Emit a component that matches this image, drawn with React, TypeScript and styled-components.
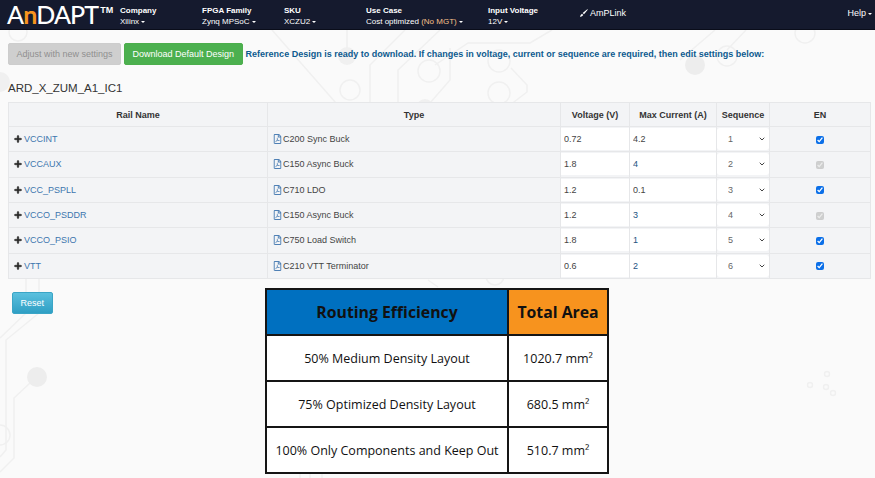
import React from "react";
import styled, { createGlobalStyle } from "styled-components";
import { FaPlus, FaRegFilePdf } from "react-icons/fa";
import { ChevronDown } from "lucide-react";

const Global = createGlobalStyle`
  html, body { margin: 0; padding: 0; }
  body { background: #fafafa; font-family: "Liberation Sans", Arial, sans-serif; color: #333; overflow: hidden; }
`;

const Page = styled.div`
  position: relative;
  width: 875px;
  height: 478px;
  overflow: hidden;
`;

const Backdrop = styled.svg`
  position: absolute;
  left: 0;
  top: 0;
  width: 875px;
  height: 478px;
  fill: none;
  stroke: #f0f0f0;
  stroke-width: 1.5;
`;

const Content = styled.div`
  position: relative;
  display: flex;
  flex-direction: column;
`;

const NavBar = styled.header`
  height: 29px;
  background: #151a2e;
  border-bottom: 1px solid #0a0d1a;
  display: flex;
  align-items: flex-start;
  color: #fff;
  position: relative;
`;

const Logo = styled.div`
  width: 120px;
  padding-left: 7px;
  box-sizing: border-box;
  font-size: 25px;
  line-height: 28px;
  font-family: "Lato", "Liberation Sans", sans-serif;
  font-weight: 500;
  letter-spacing: -0.9px;
  white-space: nowrap;
  sup { font-size: 9px; font-weight: 700; vertical-align: 11px; line-height: 0; letter-spacing: 0; margin-left: 2px; font-family: "Liberation Sans", sans-serif; }
  b { color: #f7941e; font-weight: 700; }
`;

const NavItem = styled.div<{ $w: number }>`
  width: ${(p) => p.$w}px;
  padding-top: 5px;
  font-size: 8px;
  line-height: 11px;
  white-space: nowrap;
  strong { display: block; font-weight: 700; }
  em { color: #f7c08a; font-style: normal; }
`;

const Caret = styled.i`
  display: inline-block;
  width: 0;
  height: 0;
  margin-left: 2px;
  vertical-align: middle;
  border-top: 2px solid #fff;
  border-left: 2.5px solid transparent;
  border-right: 2.5px solid transparent;
`;

const NavLink = styled.div`
  display: flex;
  align-items: center;
  gap: 2px;
  font-size: 9px;
  padding-top: 8px;
  line-height: 10px;
  svg { width: 8px; height: 8px; }
`;

const Help = styled.div`
  margin-left: auto;
  margin-right: 3px;
  padding-top: 8px;
  font-size: 9px;
  line-height: 10px;
`;

const ActionRow = styled.div`
  display: flex;
  align-items: center;
  padding: 13px 0 0 8px;
  gap: 3px;
`;

const Btn = styled.button<{ $kind: "muted" | "success" | "info" }>`
  height: 22px;
  padding: 0 7.5px;
  border-radius: 2px;
  font: 9px/20px "Liberation Sans", Arial, sans-serif;
  white-space: nowrap;
  color: ${(p) => (p.$kind === "muted" ? "#8f8f8f" : "#fff")};
  border: 1px solid
    ${(p) => (p.$kind === "muted" ? "#cdcdcd" : p.$kind === "success" ? "#4cae4c" : "#3aa5c6")};
  background: ${(p) =>
    p.$kind === "muted"
      ? "#cfcfcf"
      : p.$kind === "success"
        ? "#4cb04f"
        : "linear-gradient(#5bc0de, #2f9fc4)"};
`;

const Notice = styled.p`
  margin: 0;
  color: #0d5a8f;
  font-size: 9px;
  font-weight: 700;
  white-space: nowrap;
`;

const DesignTitle = styled.h3`
  margin: 16px 0 0 8px;
  font-size: 11.5px;
  font-weight: 400;
  line-height: 14px;
  color: #333;
`;

const RailTable = styled.table`
  margin: 7px 0 0 8px;
  width: 862px;
  height: 177px;
  table-layout: fixed;
  border-collapse: collapse;
  font-size: 9px;
  background: #f3f4f6;

  th, td { border: 1px solid #e6e7e9; padding: 0; }
  th { font-size: 9px; font-weight: 700; height: 23px; text-align: center; color: #333; }
  td { height: 24px; }
`;

const NameCell = styled.td`
  padding-left: 5px !important;
  white-space: nowrap;
  a { color: #3d76ae; text-decoration: none; }
  svg { width: 8px; height: 8px; color: #222; stroke: currentColor; stroke-width: 30; vertical-align: -1px; margin-right: 2px; }
`;

const TypeCell = styled.td`
  padding-left: 5px !important;
  white-space: nowrap;
  color: #444;
  svg { width: 9px; height: 10px; color: #4f80b5; vertical-align: -2px; margin-right: 1px; }
`;

const ValueInput = styled.input<{ $link?: boolean }>`
  display: block;
  box-sizing: border-box;
  width: 100%;
  height: 22px;
  padding: 0 3px;
  border: 0;
  background: #fff;
  color: ${(p) => (p.$link ? "#24527f" : "#444")};
  font: 9px "Liberation Sans", Arial, sans-serif;
`;

const SeqWrap = styled.div`
  position: relative;
  svg {
    position: absolute;
    right: 3px;
    top: 7px;
    width: 8px;
    height: 8px;
    color: #444;
    pointer-events: none;
  }
`;

const SeqSelect = styled.select`
  display: block;
  box-sizing: border-box;
  width: 100%;
  height: 22px;
  padding: 0 11px;
  border: 0;
  border-radius: 3px;
  background: #fff;
  color: #666;
  appearance: none;
  font: 9px "Liberation Sans", Arial, sans-serif;
`;

const EnCell = styled.td`
  text-align: center;
  input { width: 8px; height: 8px; margin: 0; vertical-align: middle; accent-color: #0b6fe8; }
`;

const LowerSection = styled.div`
  display: grid;
  grid-template-columns: 265px 343px;
  align-items: start;
`;

const ResetCell = styled.div`
  padding: 13px 0 0 12px;
`;

const Summary = styled.table`
  margin-top: 9px;
  width: 343px;
  height: 185px;
  border-collapse: collapse;
  table-layout: fixed;
  font-family: "Open Sans", "Noto Sans", sans-serif;
  background: #fff;
  color: #111;

  th, td { border: 2px solid #151515; padding: 0; text-align: center; white-space: nowrap; height: 44px; }
  td { font-size: 12.5px; }
`;

const SummaryHead = styled.th<{ $bg: string }>`
  background: ${(p) => p.$bg};
  font-size: 15.8px;
  font-weight: 700;
`;

const rails = [
  ["VCCINT", "C200 Sync Buck", "0.72", "4.2", "1", true],
  ["VCCAUX", "C150 Async Buck", "1.8", "4", "2", false],
  ["VCC_PSPLL", "C710 LDO", "1.2", "0.1", "3", true],
  ["VCCO_PSDDR", "C150 Async Buck", "1.2", "3", "4", false],
  ["VCCO_PSIO", "C750 Load Switch", "1.8", "1", "5", true],
  ["VTT", "C210 VTT Terminator", "0.6", "2", "6", true],
] as const;

const nav = [
  { w: 82, label: "Company", value: <>Xilinx</> },
  { w: 82, label: "FPGA Family", value: <>Zynq MPSoC</> },
  { w: 82, label: "SKU", value: <>XCZU2</> },
  { w: 122, label: "Use Case", value: <>Cost optimized <em>(No MGT)</em></> },
  { w: 92, label: "Input Voltage", value: <>12V</> },
];

const summary = [
  ["50% Medium Density Layout", "1020.7 mm²"],
  ["75% Optimized Density Layout", "680.5 mm²"],
  ["100% Only Components and Keep Out", "510.7 mm²"],
];

function CircuitBackdrop() {
  return (
    <Backdrop viewBox="0 0 875 478" aria-hidden="true">
      <path d="M272 30l64 73M347 30v26M405 30l-35 35v38M440 30l-42 40v33M552 30l-22 13h-62l-33 22M511 68l16 17v7l-17 13M450 48v32l-20 23M746 30l-19 20M715 30l-35 30" />
      <circle cx="347" cy="56" r="9" fill="#f0f0f0" stroke="none" />
      <circle cx="350" cy="90" r="10" />
      <circle cx="429" cy="71" r="11" />
      <circle cx="499" cy="61" r="11" />
      <circle cx="499" cy="93" r="11" />
      <circle cx="425" cy="108" r="9" fill="#f0f0f0" stroke="none" />
      <circle cx="805" cy="33" r="10" />
      <circle cx="727" cy="56" r="10" />
      <circle cx="695" cy="65" r="10" fill="#ededed" stroke="none" />
      <circle cx="18" cy="32" r="9" />
      <circle cx="0" cy="82" r="10" fill="#f0f0f0" stroke="none" />
      <path d="M26 279v34L0 338M39 279v34L6 340v110l-6 7M30 383l-16 15v60l-14 14" />
      <circle cx="37" cy="377" r="10" fill="#ededed" stroke="none" />
      <circle cx="0" cy="435" r="10" />
      <circle cx="495" cy="276" r="9" />
      <path d="M428 280l10 7M300 472v6M310 472v6M322 472v6" />
      <circle cx="810" cy="385" r="2.5" />
      <circle cx="826" cy="387" r="2.5" />
      <circle cx="827" cy="374" r="2.5" />
      <circle cx="833" cy="393" r="2.5" />
    </Backdrop>
  );
}

export default function App() {
  return (
    <Page>
      <Global />
      <CircuitBackdrop />
      <Content>
        <NavBar>
          <Logo>A<b>n</b>DAPT<sup>TM</sup></Logo>
          {nav.map((n) => (
            <NavItem key={n.label} $w={n.w}>
              <strong>{n.label}</strong>
              {n.value}
              <Caret />
            </NavItem>
          ))}
          <NavLink>
            <svg viewBox="0 0 12 12" aria-hidden="true">
              <path d="M0 12l3-1 2-2-2-2-2 2zM6 8l5-6 1-2-2 1-6 5z" fill="#fff" />
            </svg>
            AmPLink
          </NavLink>
          <Help>Help<Caret /></Help>
        </NavBar>

        <ActionRow>
          <Btn $kind="muted">Adjust with new settings</Btn>
          <Btn $kind="success">Download Default Design</Btn>
          <Notice>
            Reference Design is ready to download. If changes in voltage, current or sequence are required, then edit settings below:
          </Notice>
        </ActionRow>

        <DesignTitle>ARD_X_ZUM_A1_IC1</DesignTitle>

        <RailTable>
          <colgroup>
            <col width="259" />
            <col width="293" />
            <col width="69" />
            <col width="87" />
            <col width="53" />
            <col width="101" />
          </colgroup>
          <thead>
            <tr>
              <th>Rail Name</th>
              <th>Type</th>
              <th>Voltage (V)</th>
              <th>Max Current (A)</th>
              <th>Sequence</th>
              <th>EN</th>
            </tr>
          </thead>
          <tbody>
            {rails.map(([name, type, v, a, seq, on]) => (
              <tr key={name}>
                <NameCell><FaPlus /><a href="#">{name}</a></NameCell>
                <TypeCell><FaRegFilePdf />{type}</TypeCell>
                <td><ValueInput defaultValue={v} aria-label={`${name} voltage`} /></td>
                <td><ValueInput $link={Number(seq) % 2 === 0 || seq === "5"} defaultValue={a} aria-label={`${name} current`} /></td>
                <td>
                  <SeqWrap>
                    <SeqSelect defaultValue={seq} aria-label={`${name} sequence`}>
                      {[1, 2, 3, 4, 5, 6].map((o) => <option key={o}>{o}</option>)}
                    </SeqSelect>
                    <ChevronDown strokeWidth={3} />
                  </SeqWrap>
                </td>
                <EnCell><input type="checkbox" defaultChecked disabled={!on} aria-label={`${name} enable`} /></EnCell>
              </tr>
            ))}
          </tbody>
        </RailTable>

        <LowerSection>
          <ResetCell><Btn $kind="info">Reset</Btn></ResetCell>
          <Summary>
            <colgroup>
              <col width="242" />
              <col width="100" />
            </colgroup>
            <thead>
              <tr>
                <SummaryHead $bg="#0070c0">Routing Efficiency</SummaryHead>
                <SummaryHead $bg="#f7931e">Total Area</SummaryHead>
              </tr>
            </thead>
            <tbody>
              {summary.map(([a, b]) => (
                <tr key={a}><td>{a}</td><td>{b}</td></tr>
              ))}
            </tbody>
          </Summary>
        </LowerSection>
      </Content>
    </Page>
  );
}
